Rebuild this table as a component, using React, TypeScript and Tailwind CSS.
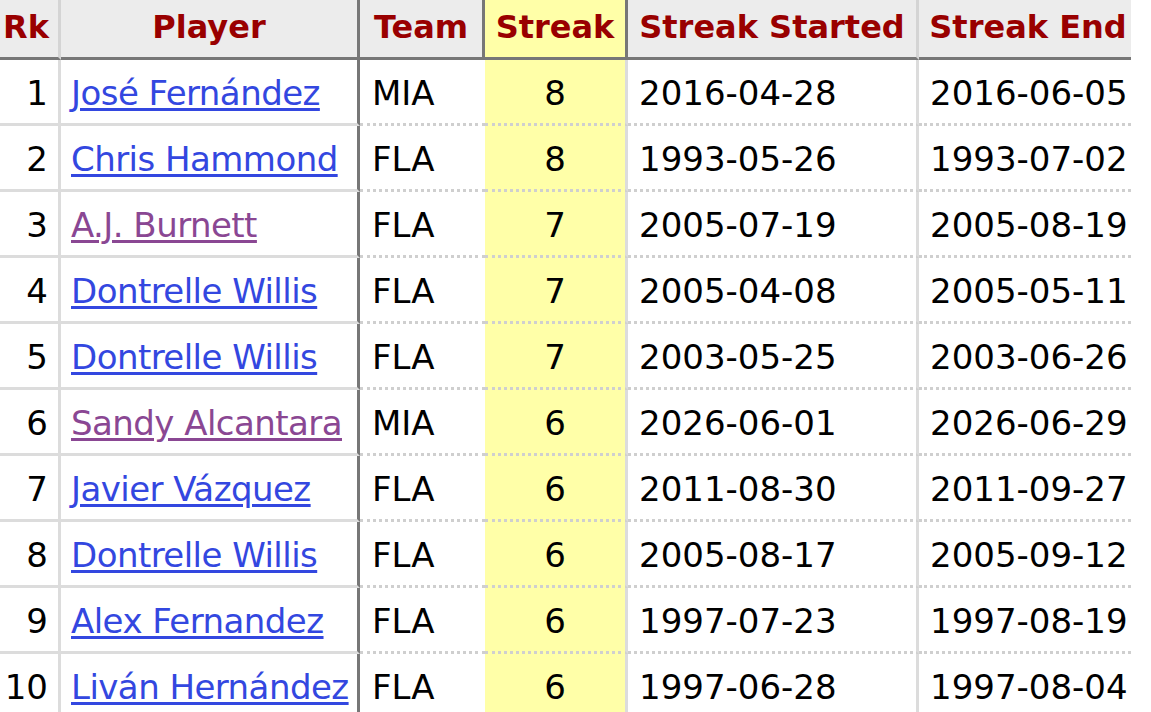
const rows = [
  { rk: 1, name: "José Fernández", visited: false, team: "MIA", streak: 8, start: "2016-04-28", end: "2016-06-05" },
  { rk: 2, name: "Chris Hammond", visited: false, team: "FLA", streak: 8, start: "1993-05-26", end: "1993-07-02" },
  { rk: 3, name: "A.J. Burnett", visited: true, team: "FLA", streak: 7, start: "2005-07-19", end: "2005-08-19" },
  { rk: 4, name: "Dontrelle Willis", visited: false, team: "FLA", streak: 7, start: "2005-04-08", end: "2005-05-11" },
  { rk: 5, name: "Dontrelle Willis", visited: false, team: "FLA", streak: 7, start: "2003-05-25", end: "2003-06-26" },
  { rk: 6, name: "Sandy Alcantara", visited: true, team: "MIA", streak: 6, start: "2026-06-01", end: "2026-06-29" },
  { rk: 7, name: "Javier Vázquez", visited: false, team: "FLA", streak: 6, start: "2011-08-30", end: "2011-09-27" },
  { rk: 8, name: "Dontrelle Willis", visited: false, team: "FLA", streak: 6, start: "2005-08-17", end: "2005-09-12" },
  { rk: 9, name: "Alex Fernandez", visited: false, team: "FLA", streak: 6, start: "1997-07-23", end: "1997-08-19" },
  { rk: 10, name: "Liván Hernández", visited: false, team: "FLA", streak: 6, start: "1997-06-28", end: "1997-08-04" },
]

export default function App() {
  return (
    <div className="h-[712px] w-[1151px] overflow-hidden bg-white font-['DejaVu_Sans',Verdana,sans-serif] text-[34px] text-black">
      <table className="border-separate border-spacing-0">
        <thead>
          {/* header row */}
          <tr className="h-[60px] bg-[#ececec] text-[32px] font-bold text-[#990000]">
            <th className="w-[61px] border-b-[3px] border-r-[3px] border-b-[#777] border-r-[#d4d4d4] pb-[4px] pl-[3px] pr-0 text-left">Rk</th>
            <th className="w-[299px] border-b-[3px] border-r-[3px] border-[#777] pb-[4px] text-center">Player</th>
            <th className="w-[125px] border-b-[3px] border-r-[3px] border-[#777] pb-[4px] text-center">Team</th>
            <th className="w-[143px] border-b-[3px] border-r-[3px] border-[#777] bg-[#ffffa8] pb-[4px] text-center">Streak</th>
            <th className="w-[291px] border-b-[3px] border-r-[3px] border-b-[#777] border-r-[#d4d4d4] pb-[4px] text-center">Streak Started</th>
            <th className="w-[212px] border-b-[3px] border-[#777] pb-[4px] pl-[6px] text-center">Streak End</th>
          </tr>
        </thead>
        <tbody>
          {rows.map((r) => (
            <tr key={r.rk} className="h-[66px]">
              <td className="border-b-[3px] border-r-[3px] border-[#dcdcdc] pr-[10px] pt-[4px] text-right">{r.rk}</td>
              <td className="border-b-[3px] border-r-[3px] border-b-[#dcdcdc] border-r-[#777] pl-[10px] pt-[4px]">
                <a
                  href="#"
                  className={`underline decoration-[3px] underline-offset-[3px] tracking-[-0.55px] ${r.visited ? "text-[#8a4793]" : "text-[#3347e0]"}`}
                >
                  {r.name}
                </a>
              </td>
              <td className="border-b-[3px] border-dotted border-b-[#cfcfcf] pl-[12px] pt-[4px]">
                {r.team}
              </td>
              <td className="border-b-[3px] border-r-[3px] border-dotted border-b-[#cfcfcf] border-r-[#dcdcdc] bg-[#ffffa8] pt-[4px] text-center [border-right-style:solid]">
                {r.streak}
              </td>
              <td className="border-b-[3px] border-r-[3px] border-dotted border-b-[#cfcfcf] border-r-[#dcdcdc] pl-[11px] pt-[4px] [border-right-style:solid]">
                {r.start}
              </td>
              <td className="border-b-[3px] border-dotted border-b-[#cfcfcf] pl-[11px] pt-[4px]">{r.end}</td>
            </tr>
          ))}
        </tbody>
      </table>
    </div>
  )
}
